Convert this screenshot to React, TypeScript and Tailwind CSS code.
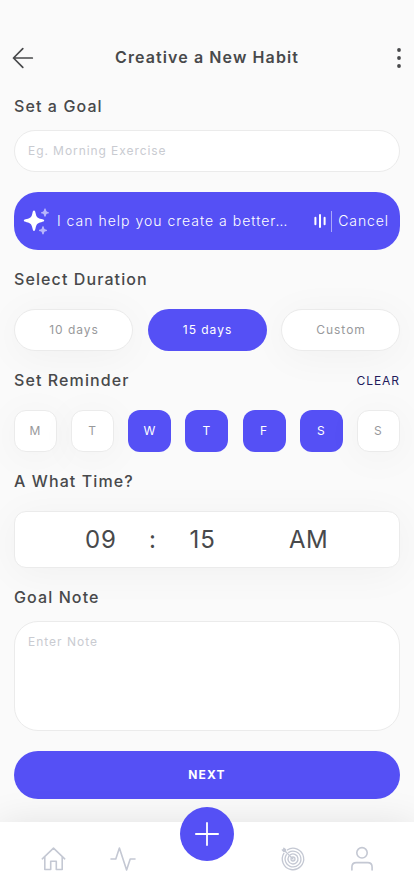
import React from "react";

const heading = "h-5 text-[16px] leading-5 font-medium tracking-[1.1px] text-[#48494b] whitespace-nowrap";
const softShadow = "shadow-[0_5px_40px_rgba(0,0,0,0.045)]";

const durations = [
  { label: "10 days", active: false },
  { label: "15 days", active: true },
  { label: "Custom", active: false },
];

const days = [
  { label: "M", active: false },
  { label: "T", active: false },
  { label: "W", active: true },
  { label: "T", active: true },
  { label: "F", active: true },
  { label: "S", active: true },
  { label: "S", active: false },
];

function BackIcon() {
  return (
    <svg width="22" height="22" viewBox="0 0 22 22" fill="none" stroke="#48494b" strokeWidth="1.7" strokeLinecap="round" strokeLinejoin="round">
      <path d="M20.3 11H1.5M10.8 1.7L1.5 11L10.8 20.3" />
    </svg>
  );
}

function SparkleIcon() {
  return (
    <svg width="26" height="28" viewBox="0 0 26 28" fill="#fff">
      <path d="M11 3.5C12 3.5 12.3 4.7 12.6 6.2C13.4 10 14.4 11.2 18.3 12C19.8 12.3 21.2 12.6 21.2 13.6C21.2 14.6 19.8 14.9 18.3 15.2C14.4 16 13.4 17.2 12.6 21C12.3 22.5 12 23.9 11 23.9C10 23.9 9.7 22.5 9.4 21C8.6 17.2 7.6 16 3.7 15.2C2.2 14.9 .8 14.6 .8 13.6C.8 12.6 2.2 12.3 3.7 12C7.6 11.2 8.6 10 9.4 6.2C9.7 4.7 10 3.5 11 3.5Z" />
      <path opacity=".58" d="M22 1.5C22.7 1.5 22.8 2.2 23 3.1C23.3 4.4 23.5 4.7 24.7 4.9C25.6 5.1 26 5.2 26 5.7C26 6.2 25.6 6.3 24.7 6.5C23.5 6.7 23.3 7 23 8.3C22.8 9.1 22.7 9.7 22 9.7C21.3 9.7 21.2 9.1 21 8.3C20.7 7 20.5 6.7 19.3 6.5C18.4 6.3 18 6.2 18 5.7C18 5.2 18.4 5.1 19.3 4.9C20.5 4.7 20.7 4.4 21 3.1C21.2 2.2 21.3 1.5 22 1.5Z" />
      <path opacity=".58" d="M20 19.2C20.7 19.2 20.8 19.9 21 20.8C21.3 22.1 21.5 22.4 22.7 22.6C23.6 22.8 24 22.9 24 23.4C24 23.9 23.6 24 22.7 24.2C21.5 24.4 21.3 24.7 21 26C20.8 26.8 20.7 27.4 20 27.4C19.3 27.4 19.2 26.8 19 26C18.7 24.7 18.5 24.4 17.3 24.2C16.4 24 16 23.9 16 23.4C16 22.9 16.4 22.8 17.3 22.6C18.5 22.4 18.7 22.1 19 20.8C19.2 19.9 19.3 19.2 20 19.2Z" />
    </svg>
  );
}

function VoiceIcon() {
  return (
    <svg width="12" height="14" viewBox="0 0 12 14" fill="none" stroke="#fff" strokeWidth="2" strokeLinecap="round">
      <path d="M1.4 3.7V10.3M6 1V13M10.6 3.7V10.3" />
    </svg>
  );
}

function HomeIcon() {
  return (
    <svg width="26" height="26" viewBox="0 0 26 26" fill="none" stroke="#c4c8d3" strokeWidth="1.6" strokeLinecap="round" strokeLinejoin="round">
      <path d="M2.3 12.8L13.5 2.2L24.7 12.8M4.8 10.8V23.5H10.7V15.2H16.3V23.5H22.2V10.8" />
    </svg>
  );
}

function ActivityIcon() {
  return (
    <svg width="26" height="26" viewBox="0 0 26 26" fill="none" stroke="#c4c8d3" strokeWidth="1.6" strokeLinecap="round" strokeLinejoin="round">
      <path d="M1 13H5.8L9.4 2L16.6 24L20.2 13H25" />
    </svg>
  );
}

function TargetIcon() {
  return (
    <svg width="26" height="26" viewBox="0 0 26 26" fill="none" stroke="#c4c8d3" strokeWidth="1.3" strokeLinecap="round" strokeLinejoin="round">
      <path d="M4 7.2A10.7 10.7 0 1 0 7.2 4" />
      <path d="M6.4 8.7A7.9 7.9 0 1 0 8.7 6.4" />
      <path d="M8.8 10.3A5 5 0 1 0 10.3 8.8" />
      <circle cx="13" cy="13" r="2" />
      <path d="M13 13L4.2 4.2M2.2 3.8L3.6 5.4L5.3 5.3L5.4 3.6L3.8 2.2L3.7 3.7Z" />
    </svg>
  );
}

function UserIcon() {
  return (
    <svg width="26" height="26" viewBox="0 0 26 26" fill="none" stroke="#c4c8d3" strokeWidth="1.6" strokeLinecap="round">
      <circle cx="13" cy="6.8" r="5.2" />
      <path d="M2.9 24V21Q2.9 16.6 7.3 16.6H18.7Q23.1 16.6 23.1 21V24" />
    </svg>
  );
}

export default function App() {
  return (
    <div className="flex h-[896px] w-[414px] flex-col overflow-hidden bg-[#fafafa] font-['Inter',sans-serif]">
      <header className="mt-[46px] flex h-6 shrink-0 items-center justify-between pl-3 pr-[13px]">
        <button className="flex w-[22px]" aria-label="Back"><BackIcon /></button>
        <h1 className="whitespace-nowrap pb-0.5 pl-[1px] text-[16px] font-semibold leading-[22px] tracking-[1.1px] text-[#48494b]">Creative a New Habit</h1>
        <button className="flex w-[22px] justify-end" aria-label="More">
          <svg width="4" height="20" viewBox="0 0 4 20" fill="#48494b">
            <circle cx="2" cy="2" r="1.9" />
            <circle cx="2" cy="10" r="1.9" />
            <circle cx="2" cy="18" r="1.9" />
          </svg>
        </button>
      </header>

      <main className="flex shrink-0 flex-col px-3.5 pt-[26px]">
        <h2 className={heading}>Set a Goal</h2>
        <div className="mt-3.5 flex h-[42px] items-center rounded-full border border-[#ebebeb] bg-white px-[13px] text-[12px] tracking-[0.93px] text-[#c9cbd1]">Eg. Morning Exercise</div>

        <div className="mt-5 flex h-[58px] items-center rounded-[24px] bg-[#5550f5] pl-[9px] pr-[11px] text-white">
          <SparkleIcon />
          <span className="ml-2 flex-1 whitespace-nowrap pb-px text-[14px] font-[350] leading-[19px] tracking-[1px]">I can help you create a better…</span>
          <VoiceIcon />
          <span className="ml-[5px] h-[21px] w-px bg-white/50" />
          <span className="ml-1.5 pb-px text-[14px] font-[350] leading-[19px] tracking-[0.9px]">Cancel</span>
        </div>

        <h2 className={heading + " mt-[19px]"}>Select Duration</h2>
        <div className="mt-5 flex justify-between">
          {durations.map((d) => (
            <button
              key={d.label}
              className={
                "flex h-[42px] w-[119px] items-center justify-center rounded-full pl-px text-[12px] tracking-[0.98px] " +
                (d.active ? "bg-[#5550f5] text-white" : "border border-[#ebebeb] bg-white text-[#98999b] " + softShadow)
              }
            >
              {d.label}
            </button>
          ))}
        </div>

        <div className="mt-[19px] flex h-5 items-center justify-between">
          <h2 className={heading}>Set Reminder</h2>
          <button className="pt-0.5 text-[12px] tracking-[0.95px] text-[#231a5c]">CLEAR</button>
        </div>
        <div className="mt-5 flex justify-between">
          {days.map((d, i) => (
            <button
              key={i}
              className={
                "flex h-[42px] w-[43px] items-center justify-center rounded-[12px] text-[12px] tracking-[1px] " +
                (d.active ? "bg-[#5550f5] text-white" : "border border-[#ebebeb] bg-white text-[#98999b] " + softShadow)
              }
            >
              {d.label}
            </button>
          ))}
        </div>

        <h2 className={heading + " mt-[19px]"}>A What Time?</h2>
        <div className={"mt-5 flex h-[57px] items-center rounded-[12px] border border-[#ebebeb] bg-white pl-[70px] text-[24px] tracking-[0.9px] text-[#48494b] " + softShadow}>
          <span className="w-[64px]">09</span>
          <span className="w-[40.5px]">:</span>
          <span className="w-[99.5px]">15</span>
          <span className="tracking-[0.4px]">AM</span>
        </div>

        <h2 className={heading + " mt-[19px]"}>Goal Note</h2>
        <div className="mt-3.5 h-[110px] rounded-[24px] border border-[#ebebeb] bg-white px-[13px] pt-[11px] text-[12px] leading-[18px] tracking-[1px] text-[#c9cbd1]">Enter Note</div>

        <button className="mt-5 flex h-12 items-center justify-center rounded-full bg-[#5550f5] text-[12px] font-bold tracking-[1.2px] text-white">NEXT</button>
      </main>

      <nav className="relative mt-[23px] flex h-[74px] shrink-0 items-start justify-between bg-white pl-[40px] pr-[39px] pt-6 shadow-[0_5px_40px_rgba(0,0,0,0.12)]">
        <div className="flex gap-11">
          <HomeIcon />
          <ActivityIcon />
        </div>
        <div className="flex gap-[43px]">
          <TargetIcon />
          <UserIcon />
        </div>
        <button className="absolute -top-[15px] left-[180px] flex size-[54px] items-center justify-center rounded-full bg-[#5550f5]" aria-label="Add">
          <svg width="24" height="24" viewBox="0 0 24 24" stroke="#fff" strokeWidth="1.8" strokeLinecap="round">
            <path d="M12 .9V23.1M.9 12H23.1" />
          </svg>
        </button>
      </nav>
    </div>
  );
}
